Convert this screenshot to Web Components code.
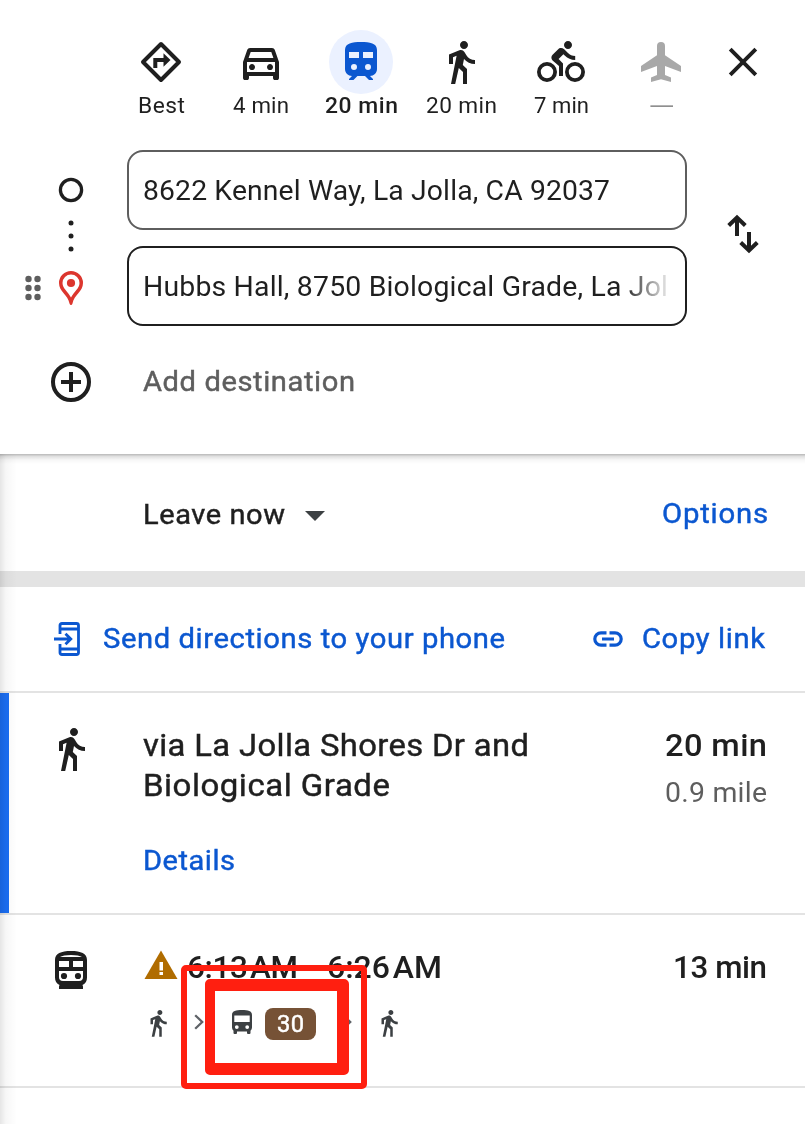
<!DOCTYPE html>
<html lang="en">
<head>
<meta charset="utf-8">
<title>Directions</title>
<style>
html,body{margin:0;padding:0;background:#fff}
body{width:805px;height:1124px;overflow:hidden;font-family:Roboto,"Liberation Sans",sans-serif;color:#1f1f1f}
</style>
</head>
<body>
<directions-panel></directions-panel>
<script>
const ICONS = {
  best: ['0 0 48 48', '<path d="M24 6 42 24 24 42 6 24Z" fill="none" stroke="currentColor" stroke-width="4" stroke-linejoin="round"/><path d="M18.3 30V22H27" fill="none" stroke="currentColor" stroke-width="4"/><path d="M26.5 15.2 33.5 22l-7 6.8Z"/>'],
  car: ['0 -960 960 960', '<path d="M240-200v40q0 17-11.5 28.5T200-120h-40q-17 0-28.5-11.5T120-160v-320l84-240q6-18 21.5-29t34.5-11h440q19 0 34.5 11t21.5 29l84 240v320q0 17-11.5 28.5T800-120h-40q-17 0-28.5-11.5T720-160v-40H240Zm-8-360h496l-42-120H274l-42 120Zm68 240q25 0 42.5-17.5T360-380q0-25-17.5-42.5T300-440q-25 0-42.5 17.5T240-380q0 25 17.5 42.5T300-320Zm360 0q25 0 42.5-17.5T720-380q0-25-17.5-42.5T660-440q-25 0-42.5 17.5T600-380q0 25 17.5 42.5T660-320Zm-460 40h560v-200H200v200Z"/>'],
  train: ['0 0 24 24', '<path fill-rule="evenodd" d="M12 2c-4.4 0-8 .5-8 4v9.5C4 17.43 5.57 19 7.5 19L6 20.5v.5h2.23l2-2H14l2 2h2v-.5L16.5 19c1.93 0 3.5-1.57 3.5-3.5V6c0-3.5-3.58-4-8-4zM6 7v3h5V7zM13 7v3h5V7zM8.5 13a1.5 1.5 0 1 0 0 3 1.5 1.5 0 0 0 0-3zM15.5 13a1.5 1.5 0 1 0 0 3 1.5 1.5 0 0 0 0-3z"/>'],
  walk: ['0 0 24 24', '<path d="M13.5 5.5c1.1 0 2-.9 2-2s-.9-2-2-2-2 .9-2 2 .9 2 2 2zM9.8 8.9 7 23h2.1l1.8-8 2.1 2v6h2v-7.5l-2.1-2 .6-3C14.8 12 16.8 13 19 13v-2c-1.9 0-3.5-1-4.3-2.4l-1-1.6c-.4-.6-1-1-1.7-1-.3 0-.5.1-.8.1L6 8.3V13h2V9.600l1.800-.7"/>'],
  bike: ['0 0 24 24', '<path d="M15.5 5.5c1.1 0 2-.9 2-2s-.9-2-2-2-2 .9-2 2 .9 2 2 2zM10.8 10.5l2.4-2.4.8.8c1.3 1.3 3 2.1 5.1 2.1V9c-1.5 0-2.7-.6-3.6-1.5l-1.9-1.9c-.5-.4-1-.6-1.6-.6s-1.1.2-1.4.6L7.8 8.4c-.4.4-.6.9-.6 1.4 0 .6.2 1.1.6 1.4L11 14v5h2v-6.2z"/><g fill="none" stroke="currentColor" stroke-width="1.9"><circle cx="5" cy="17" r="4.05"/><circle cx="19" cy="17" r="4.05"/></g>'],
  plane: ['0 0 24 24', '<path d="M22 17v-3l-8-5.4V4a2 2 0 0 0-4 0v4.6L2 14v3l8-3v4.5l-3 1.300V22l5-1.400 5 1.400v-2.200l-3-1.300V14z"/>'],
  close: ['0 0 48 48', '<path d="m11.2 11.2 25.600 25.600M36.800 11.200 11.200 36.800" stroke="currentColor" stroke-width="3.900"/>'],
  rail: ['0 0 127 176', '<circle cx="71" cy="40" r="10.6" fill="none" stroke="currentColor" stroke-width="3.3"/><circle cx="71" cy="73" r="2.5"/><circle cx="71" cy="86" r="2.5"/><circle cx="71" cy="99" r="2.5"/><g fill="#5e5e5e"><circle cx="28.5" cy="129" r="3.2"/><circle cx="37.5" cy="129" r="3.2"/><circle cx="28.5" cy="138" r="3.2"/><circle cx="37.5" cy="138" r="3.2"/><circle cx="28.5" cy="147" r="3.2"/><circle cx="37.5" cy="147" r="3.2"/></g><path fill-rule="evenodd" d="M71 121a12 12 0 0 0-12 12c0 9 9 11.500 10.500 20.500Q70 155 71 155T72.500 153.500C74 144.500 83 142 83 133a12 12 0 0 0-12-12ZM71 124.500a8.500 8.500 0 0 1 8.500 8.500c0 5.500-5.500 8.500-8.500 14.500-3-6-8.500-9-8.500-14.500a8.500 8.500 0 0 1 8.500-8.500Z" fill="#dc362e"/><circle cx="71" cy="133" r="4.100" fill="#dc362e"/>'],
  swap: ['0 0 48 48', '<path d="M18 26V8.500M9.700 15.500 18 7.500 26.300 15.500M30 22v17.500M21.700 32.500 30 40.500 38.300 32.500" fill="none" stroke="currentColor" stroke-width="4"/>'],
  plus: ['0 0 48 48', '<g fill="none" stroke="currentColor" stroke-width="4"><circle cx="24" cy="24" r="18"/><path d="M24 14v20M14 24h20"/></g>'],
  caret: ['0 0 20 10', '<path d="M0 0h20L10 10z"/>'],
  phone: ['0 0 28 36', '<g fill="none" stroke="currentColor" stroke-width="2.800"><path d="M6 13V4.500Q6 2.500 8 2.500H22.500Q24.500 2.500 24.500 4.500V31.500Q24.500 33.500 22.500 33.500H8Q6 33.500 6 31.500V23M6 8H24.500M6 28H24.500"/><path d="M0 18H16.500M11.500 12.700 16.800 18 11.500 23.300"/></g>'],
  link: ['0 0 30 16', '<g fill="none" stroke="currentColor" stroke-width="3.200"><path d="M13.500 1.800H8a6.200 6.200 0 0 0 0 12.400h5.500M16.500 1.800H22a6.200 6.200 0 0 1 0 12.400H16.500M9 8H21"/></g>'],
  subway: ['0 0 32 38', '<path fill-rule="evenodd" d="M16 0C6 0 0 2.500 0 9V26.500Q0 32 4.500 34L4 35.500V38H28V35.500L27.500 34Q32 32 32 26.500V9C32 2.500 26 0 16 0ZM5 6Q8 4 16 4T27 6ZM4 10H14V16H4ZM18 10H28V16H18ZM4 20H28V26Q28 30 24 30H8Q4 30 4 26Z"/><circle cx="9" cy="25" r="3.100"/><circle cx="23" cy="25" r="3.100"/>'],
  warn: ['0 0 34 30', '<path d="M17 .5 33.500 29H.5Z"/><path d="M15.500 12h3.500v8.500h-3.500zM15.500 22h3.500v3h-3.500z" fill="#fff"/>'],
  chevron: ['0 0 10 16', '<path d="m1.200 1.200 7 6.800-7 6.800" fill="none" stroke="currentColor" stroke-width="2.300"/>'],
  bus: ['0 0 20 24', '<path fill-rule="evenodd" d="M10 0C4 0 0 .8 0 5V17.500Q0 19.500 1.500 20.800V23Q1.500 24 2.500 24H4Q5 24 5 23V21.500H15V23Q15 24 16 24H17.500Q18.500 24 18.500 23V20.800Q20 19.500 20 17.500V5C20 .8 16 0 10 0ZM2.300 5.500H17.700V12H2.300ZM4.800 15.200a1.900 1.900 0 1 0 0 3.800 1.900 1.900 0 0 0 0-3.800ZM15.200 15.200a1.900 1.900 0 1 0 0 3.800 1.900 1.900 0 0 0 0-3.800Z"/>']
};

class MapIcon extends HTMLElement {
  connectedCallback() {
    const root = this.attachShadow({mode: 'open'});
    const [box, body] = ICONS[this.getAttribute('name')];
    const w = this.getAttribute('w') || 48, h = this.getAttribute('h') || w;
    root.innerHTML = `<style>:host{display:block;flex:none;width:${w}px;height:${h}px}svg{display:block}</style><svg width="${w}" height="${h}" viewBox="${box}" fill="currentColor">${body}</svg>`;
  }
}
customElements.define('map-icon', MapIcon);

/* A single line of text that fills the width given in "w",
   half by tracking and half by widening the glyphs. */
class FittedText extends HTMLElement {
  connectedCallback() {
    const root = this.attachShadow({mode: 'open'});
    root.innerHTML = `<style>
      :host{display:block;flex:none;white-space:pre}
      :host([semi]){-webkit-text-stroke:.45px currentColor}
      span{display:inline-block;transform-origin:0 0}
    </style><span><slot></slot></span>`;
    const span = root.querySelector('span');
    const w = +this.getAttribute('w');
    const natural = span.getBoundingClientRect().width;
    const gaps = this.textContent.length - 1;
    const scale = gaps ? Math.sqrt(w / natural) : w / natural;
    if (gaps) this.style.letterSpacing = ((w / scale - natural) / gaps).toFixed(3) + 'px';
    span.style.transform = `scaleX(${scale.toFixed(4)})`;
    this.style.width = w + 'px';
  }
}
customElements.define('fitted-text', FittedText);

class TravelMode extends HTMLElement {
  connectedCallback() {
    const root = this.attachShadow({mode: 'open'});
    root.innerHTML = `<style>
      :host{display:flex;flex-direction:column;align-items:center;width:100px;font-size:22px;line-height:28px}
      .disc{width:64px;height:64px;border-radius:50%;display:grid;place-items:center;margin-bottom:-2px}
      :host([selected]) .disc{background:#ebf1ff;color:#0b57d0}
      :host([selected]){font-weight:500}
      :host([disabled]) .disc{color:#a8a8a8}
      :host([disabled]){color:#8f8f8f;line-height:30px}
    </style><div class="disc"><map-icon name="${this.getAttribute('icon')}"></map-icon></div>
    <fitted-text w="${this.getAttribute('w')}">${this.getAttribute('label')}</fitted-text>`;
  }
}
customElements.define('travel-mode', TravelMode);

class AddressField extends HTMLElement {
  connectedCallback() {
    this.attachShadow({mode: 'open'}).innerHTML = `<style>
      :host{display:flex;align-items:center;box-sizing:border-box;height:80px;border:2px solid #5e5e5e;border-radius:16px;padding:2px 18px 0 14px;font-size:28px;line-height:40px}
      :host([active]){border-color:#1f1f1f}
      div{width:524px;overflow:hidden}
      :host([active]) div{-webkit-mask-image:linear-gradient(90deg,#000 480px,transparent 530px);mask-image:linear-gradient(90deg,#000 480px,transparent 530px)}
    </style><div><slot></slot></div>`;
  }
}
customElements.define('address-field', AddressField);

class RouteHeader extends HTMLElement {
  connectedCallback() {
    this.attachShadow({mode: 'open'}).innerHTML = `<style>
      :host{display:block;box-sizing:border-box;height:454px;padding-top:30px;background:#fff}
      .modes{display:flex;height:120px;padding-left:111px}
      .modes>map-icon{margin:8px 0 0 8px}
      .route{display:grid;grid-template-columns:127px 560px 1fr}
      .fields{display:grid;gap:16px}
      .swap{margin:60px 0 0 32px}
      .add{display:flex;align-items:center;height:80px;margin-top:16px;padding-left:47px;font-size:28px;line-height:40px}
      .add fitted-text{margin-left:48px;color:#5e5e5e}
    </style>
    <div class="modes">
      <travel-mode icon="best" label="Best" w="47"></travel-mode>
      <travel-mode icon="car" label="4 min" w="56"></travel-mode>
      <travel-mode icon="train" label="20 min" w="73" selected></travel-mode>
      <travel-mode icon="walk" label="20 min" w="71"></travel-mode>
      <travel-mode icon="bike" label="7 min" w="55"></travel-mode>
      <travel-mode icon="plane" label="—" w="27" disabled></travel-mode>
      <map-icon name="close"></map-icon>
    </div>
    <div class="route">
      <map-icon name="rail" w="127" h="176"></map-icon>
      <div class="fields">
        <address-field><fitted-text w="467">8622 Kennel Way, La Jolla, CA 92037</fitted-text></address-field>
        <address-field active><fitted-text w="525">Hubbs Hall, 8750 Biological Grade, La Jol</fitted-text></address-field>
      </div>
      <map-icon class="swap" name="swap"></map-icon>
    </div>
    <div class="add"><map-icon name="plus"></map-icon><fitted-text semi w="212">Add destination</fitted-text></div>`;
  }
}
customElements.define('route-header', RouteHeader);

class TripRow extends HTMLElement {
  connectedCallback() {
    this.attachShadow({mode: 'open'}).innerHTML = `<style>
      :host{display:grid;grid-template-columns:143px 1fr auto;box-sizing:border-box;border-bottom:2px solid #e3e3e3;padding:32px 38px 0 0;font-size:32px;line-height:40px}
      :host([selected]){box-shadow:inset 9px 0 #1b6ef3}
      .end{display:flex;flex-direction:column;align-items:flex-end}
    </style><slot name="icon"></slot><div><slot></slot></div><div class="end"><slot name="end"></slot></div>`;
  }
}
customElements.define('trip-row', TripRow);

class TransitLegs extends HTMLElement {
  connectedCallback() {
    this.attachShadow({mode: 'open'}).innerHTML = `<style>
      :host{display:block;position:relative;color:#3c4043}
      .time{display:flex;color:#1f1f1f;font-weight:500;word-spacing:-5px}
      .time map-icon{margin:3px 9px 0 1px;color:#b06c00}
      .dash{width:29px;text-align:center;overflow:hidden;font-weight:400}
      .legs{display:flex;align-items:center;height:32px;margin-top:21px}
      .chev{color:#5f6368}
      .num{display:grid;place-items:center;width:51px;height:32px;border-radius:8px;background:#765236;color:#fff;font-size:23.5px;line-height:32px;margin:0 26px 0 13px}
      .mark{position:absolute;box-sizing:border-box;border:6px solid #ff1f10;border-radius:5px}
      .outer{left:38px;top:18px;width:186px;height:124px}
      .inner{left:62px;top:32px;width:144px;height:96px;border-width:12px 12px 12px 10px}
    </style>
    <div class="time"><map-icon name="warn" w="34" h="30"></map-icon><fitted-text w="111">6:13 AM</fitted-text><span class="dash">—</span><fitted-text w="115">6:26 AM</fitted-text></div>
    <div class="legs">
      <map-icon name="walk" w="30" style="margin-top:-2px"></map-icon>
      <map-icon class="chev" name="chevron" w="10" h="16" style="margin:-4px 0 0 21px"></map-icon>
      <map-icon name="bus" w="20" h="24" style="margin:-4px 0 0 28px"></map-icon>
      <span class="num"><fitted-text semi w="27">30</fitted-text></span>
      <map-icon class="chev" name="chevron" w="10" h="16" style="margin:-4px 0 0 0"></map-icon>
      <map-icon name="walk" w="30" style="margin:-2px 0 0 22px"></map-icon>
    </div>
    <div class="mark outer"></div><div class="mark inner"></div>`;
  }
}
customElements.define('transit-legs', TransitLegs);

class DirectionsPanel extends HTMLElement {
  connectedCallback() {
    this.attachShadow({mode: 'open'}).innerHTML = `<style>
      :host{display:block;width:805px;height:1124px;background:#fff;overflow:hidden}
      .results{position:relative;height:670px;font-size:28px;line-height:40px}
      .results::before{content:"";position:absolute;inset:0 0 auto 0;height:10px;background:linear-gradient(rgba(0,0,0,.28),rgba(0,0,0,.12) 25%,rgba(0,0,0,.03) 60%,transparent)}
      .results::after{content:"";position:absolute;inset:0 auto 0 0;width:17px;background:linear-gradient(90deg,rgba(0,0,0,.1),rgba(0,0,0,.03) 35%,transparent)}
      .blue{color:#0b57d0}
      .bar{display:flex;align-items:center;box-sizing:border-box}
      .depart{height:117px;padding:4px 37px 0 143px}
      .depart map-icon{margin:2px 0 0 20px;color:#3c4043}
      .depart .blue{margin:-2px 0 0 auto}
      .band{height:16px;background:#e3e3e3}
      .share{height:106px;padding:0 40px 0 54px;border-bottom:2px solid #e3e3e3}
      .share fitted-text{margin-top:-1px}
      .share .send{margin-left:21px}.share .link{margin-left:auto}.share .copy{margin-left:19px}
      .details{font-size:28px;margin-top:36px}
      .miles{font-size:28px;margin-top:8px;color:#5e5e5e}
      .med{font-weight:500}
    </style>
    <route-header></route-header>
    <div class="results">
      <div class="bar depart"><fitted-text semi w="142">Leave now</fitted-text><map-icon name="caret" w="20" h="10"></map-icon><fitted-text semi class="blue" w="106">Options</fitted-text></div>
      <div class="band"></div>
      <div class="bar share blue"><map-icon name="phone" w="28" h="36" style="margin-top:-1px"></map-icon><fitted-text semi class="send" w="402">Send directions to your phone</fitted-text><map-icon class="link" name="link" w="30" h="16"></map-icon><fitted-text semi class="copy" w="123">Copy link</fitted-text></div>
      <trip-row selected style="height:222px">
        <map-icon slot="icon" name="walk" style="margin-left:47px"></map-icon>
        <fitted-text semi w="386">via La Jolla Shores Dr and</fitted-text>
        <fitted-text semi w="247">Biological Grade</fitted-text>
        <fitted-text semi class="details blue" w="92">Details</fitted-text>
        <fitted-text class="med" slot="end" w="102">20 min</fitted-text>
        <fitted-text class="miles" slot="end" w="102">0.9 mile</fitted-text>
      </trip-row>
      <trip-row style="height:173px">
        <map-icon slot="icon" name="subway" w="32" h="38" style="margin:4px 0 0 55px"></map-icon>
        <transit-legs></transit-legs>
        <fitted-text class="med" slot="end" w="94">13 min</fitted-text>
      </trip-row>
    </div>`;
  }
}
customElements.define('directions-panel', DirectionsPanel);
</script>
</body>
</html>
